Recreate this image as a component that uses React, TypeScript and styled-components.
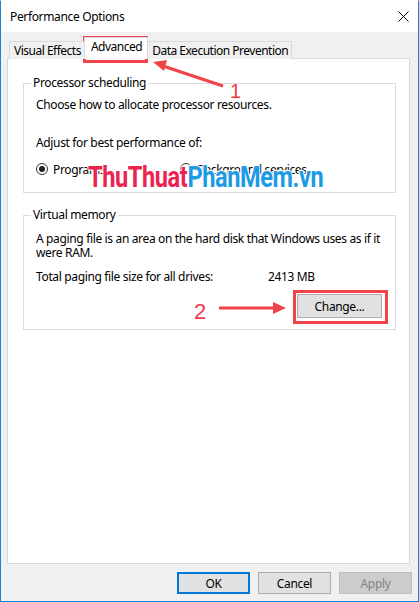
import React from "react";
import styled, { createGlobalStyle, css } from "styled-components";

const Global = createGlobalStyle`
  html, body { margin: 0; padding: 0; background: #f0f0f0; }
  body { font-family: "Noto Sans", "Open Sans", sans-serif; font-size: 12px; letter-spacing: -0.35px; color: #000; }
  * { box-sizing: border-box; }
`;

const Window = styled.div`
  position: relative;
  width: 419px;
  height: 602px;
  border: 1px solid #1883d7;
  border-top-color: #ffffff;
  background: #f0f0f0;
  display: flex;
  flex-direction: column;
  overflow: hidden;
`;

const TitleBar = styled.div`
  height: 31px;
  background: #ffffff;
  display: flex;
  align-items: center;
  justify-content: space-between;
  padding: 0 9px 0 9px;
  font-size: 12px;
  flex-shrink: 0;
`;

const CloseIcon = styled.svg`
  width: 11px;
  height: 11px;
`;

const Body = styled.div`
  flex: 1;
  display: flex;
  flex-direction: column;
  padding: 0 8px 0 6px;
`;

const TabStrip = styled.div`
  display: flex;
  align-items: flex-end;
  height: 27px;
  padding-left: 2px;
  position: relative;
  z-index: 1;
  margin-bottom: -1px;
  letter-spacing: -0.5px;
`;

const Tab = styled.div<{ $active?: boolean }>`
  height: 18px;
  padding: 0 3px 0 4px;
  display: flex;
  align-items: center;
  background: #f0f0f0;
  border: 1px solid #d9d9d9;
  border-bottom: none;
  white-space: nowrap;
  ${(p) =>
    p.$active &&
    css`
      height: 22px;
      background: #ffffff;
      padding: 0 5px 4px 6px;
      margin: 0 -1px 0 -1px;
      position: relative;
    `}
`;

const Highlight = styled.div`
  position: absolute;
  border: 3px solid #f04448;
  pointer-events: none;
`;

const Panel = styled.div`
  height: 506px;
  background: #ffffff;
  border: 1px solid #d9d9d9;
  padding: 16px 13px 0 15px;
  display: flex;
  flex-direction: column;
`;

const Group = styled.fieldset<{ $gap?: number }>`
  margin: ${(p) => p.$gap ?? 0}px 0 0 0;
  padding: 0 13px 0 12px;
  border: 1px solid #dcdcdc;
  min-width: 0;
  display: flex;
  flex-direction: column;
`;

const Legend = styled.legend`
  padding: 0 2px;
  margin-left: -5px;
  line-height: 16px;
`;

const Line = styled.div<{ $top: number; $lh?: number }>`
  margin-top: ${(p) => p.$top}px;
  line-height: ${(p) => p.$lh ?? 16}px;
`;

const RadioRow = styled.div`
  display: flex;
  align-items: center;
  height: 16px;
  margin-top: 10px;
  margin-bottom: 15px;
`;

const RadioItem = styled.label<{ $w?: number }>`
  display: flex;
  align-items: center;
  gap: 5px;
  width: ${(p) => (p.$w ? `${p.$w}px` : "auto")};
`;

const RadioCircle = styled.span<{ $checked?: boolean }>`
  width: 12px;
  height: 12px;
  border-radius: 50%;
  border: 1px solid #333333;
  display: flex;
  align-items: center;
  justify-content: center;
  &::after {
    content: "";
    width: 6px;
    height: 6px;
    border-radius: 50%;
    background: ${(p) => (p.$checked ? "#222" : "transparent")};
  }
`;

const InfoRow = styled.div`
  display: flex;
  margin-top: 10px;
  line-height: 14px;
`;

const InfoLabel = styled.span`
  width: 232px;
`;

const ButtonRow = styled.div<{ $top?: number; $bottom?: number }>`
  display: flex;
  justify-content: flex-end;
  gap: 8px;
  margin-top: ${(p) => p.$top ?? 0}px;
  margin-bottom: ${(p) => p.$bottom ?? 0}px;
`;

const Button = styled.button<{ $variant?: "default" | "primary" | "disabled"; $w?: number; $h?: number }>`
  width: ${(p) => p.$w ?? 73}px;
  height: ${(p) => p.$h ?? 22}px;
  font-family: inherit;
  font-size: 12px;
  letter-spacing: inherit;
  color: #000;
  background: #e1e1e1;
  border: 1px solid #adadad;
  padding: 0;
  ${(p) =>
    p.$variant === "primary" &&
    css`
      border: 2px solid #0078d7;
    `}
  ${(p) =>
    p.$variant === "disabled" &&
    css`
      background: #cccccc;
      border-color: #bfbfbf;
      color: #838383;
    `}
`;

const Footer = styled.div`
  display: flex;
  justify-content: flex-end;
  gap: 8px;
  padding: 8px 0 0 0;
  margin-right: -2px;
`;

const Overlay = styled.svg`
  position: absolute;
  left: 0;
  top: 0;
  width: 419px;
  height: 602px;
  pointer-events: none;
`;

const Num = styled.span<{ $x: number; $y: number; $size: number; $weight?: number }>`
  position: absolute;
  left: ${(p) => p.$x}px;
  top: ${(p) => p.$y}px;
  font-family: "Liberation Sans", Arial, sans-serif;
  font-size: ${(p) => p.$size}px;
  font-weight: ${(p) => p.$weight ?? 400};
  letter-spacing: 0;
  line-height: 1;
  color: #ef3b47;
`;

const Watermark = styled.div`
  position: absolute;
  left: 87px;
  top: 160px;
  font-family: Roboto, "Liberation Sans", sans-serif;
  font-weight: 700;
  font-size: 30px;
  line-height: 32px;
  letter-spacing: -0.5px;
  white-space: nowrap;
  transform: scaleX(0.785);
  transform-origin: left top;
  text-shadow: 0 0 2px #fff, 1px 1px 1px #fff, -1px -1px 1px #fff, 1px -1px 1px #fff, -1px 1px 1px #fff;
  pointer-events: none;
`;

const Red = styled.span`
  color: #ea2350;
`;
const Blue = styled.span`
  color: #1d9ae4;
`;

export default function App() {
  return (
    <>
      <Global />
      <Window>
        <TitleBar>
          <span>Performance Options</span>
          <CloseIcon viewBox="0 0 11 11">
            <path d="M0.5 0.5 L10.5 10.5 M10.5 0.5 L0.5 10.5" stroke="#000" strokeWidth="1" fill="none" />
          </CloseIcon>
        </TitleBar>
        <Body>
          <TabStrip>
            <Tab>Visual Effects</Tab>
            <Tab $active>Advanced</Tab>
            <Tab>Data Execution Prevention</Tab>
          </TabStrip>
          <Panel>
            <Group>
              <Legend>Processor scheduling</Legend>
              <Line $top={6}>Choose how to allocate processor resources.</Line>
              <Line $top={22}>Adjust for best performance of:</Line>
              <RadioRow>
                <RadioItem $w={144}>
                  <RadioCircle $checked />
                  Programs
                </RadioItem>
                <RadioItem>
                  <RadioCircle />
                  Background services
                </RadioItem>
              </RadioRow>
            </Group>
            <Group $gap={14}>
              <Legend>Virtual memory</Legend>
              <Line $top={9} $lh={14}>
                A paging file is an area on the hard disk that Windows uses as if it were RAM.
              </Line>
              <InfoRow>
                <InfoLabel>Total paging file size for all drives:</InfoLabel>
                <span>2413 MB</span>
              </InfoRow>
              <ButtonRow $top={10} $bottom={11}>
                <Button $w={85} $h={24}>Change...</Button>
              </ButtonRow>
            </Group>
          </Panel>
          <Footer>
            <Button $variant="primary">OK</Button>
            <Button>Cancel</Button>
            <Button $variant="disabled">Apply</Button>
          </Footer>
        </Body>

        <Highlight style={{ left: 82, top: 35, width: 65, height: 27 }} />
        <Highlight style={{ left: 292, top: 289, width: 95, height: 34 }} />

        <Watermark>
          <Red>ThuThuat</Red>
          <Blue>PhanMem.vn</Blue>
        </Watermark>

        <Overlay viewBox="0 0 419 602">
          <line x1="222" y1="85" x2="162" y2="65" stroke="#f04448" strokeWidth="3" />
          <polygon points="152,61 166,59 163,70" fill="#f04448" />
          <line x1="218" y1="307" x2="274" y2="307" stroke="#f04448" strokeWidth="3" />
          <polygon points="285,307 272,301 272,313" fill="#f04448" />
        </Overlay>
        <Num $x={229} $y={80} $size={20}>1</Num>
        <Num $x={193} $y={300} $size={22}>2</Num>
      </Window>
    </>
  );
}
